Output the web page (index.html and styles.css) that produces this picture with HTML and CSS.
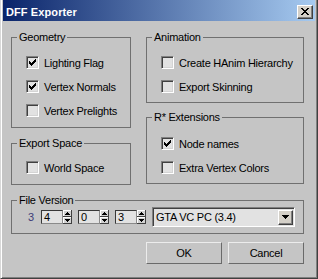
FILE: index.html
```html
<!DOCTYPE html>
<html lang="en">
<head>
    <meta charset="UTF-8">
    <title>DFF Exporter</title>
    <link rel="stylesheet" href="styles.css">
</head>
<body>
    <div class="window">
        <div class="titlebar">
            <span class="title">DFF Exporter</span>
            <button class="close">
                <svg width="8" height="7" viewBox="0 0 8 7" shape-rendering="crispEdges">
                    <path d="M0 0h2v1H0zM6 0h2v1H6zM1 1h2v1H1zM5 1h2v1H5zM2 2h4v1H2zM3 3h2v1H3zM2 4h4v1H2zM1 5h2v1H1zM5 5h2v1H5zM0 6h2v1H0zM6 6h2v1H6z" fill="#000"/>
                </svg>
            </button>
        </div>

        <div class="dialog">
            <div class="columns">
                <div class="col">
                    <fieldset class="group">
                        <legend>Geometry</legend>
                        <div class="group-body">
                            <label class="check"><span class="box"><svg width="11" height="11" viewBox="0 0 11 11" shape-rendering="crispEdges"><path d="M2 4H3V5H4V6H5V5H6V4H7V3H8V2H9V5H8V6H7V7H6V8H5V9H4V8H3V7H2Z"/></svg></span>Lighting Flag</label>
                            <label class="check"><span class="box"><svg width="11" height="11" viewBox="0 0 11 11" shape-rendering="crispEdges"><path d="M2 4H3V5H4V6H5V5H6V4H7V3H8V2H9V5H8V6H7V7H6V8H5V9H4V8H3V7H2Z"/></svg></span>Vertex Normals</label>
                            <label class="check"><span class="box"></span>Vertex Prelights</label>
                        </div>
                    </fieldset>

                    <fieldset class="group export-space">
                        <legend>Export Space</legend>
                        <div class="group-body">
                            <label class="check"><span class="box"></span>World Space</label>
                        </div>
                    </fieldset>
                </div>

                <div class="col">
                    <fieldset class="group animation">
                        <legend>Animation</legend>
                        <div class="group-body">
                            <label class="check"><span class="box"></span>Create HAnim Hierarchy</label>
                            <label class="check"><span class="box"></span>Export Skinning</label>
                        </div>
                    </fieldset>

                    <fieldset class="group extensions">
                        <legend>R* Extensions</legend>
                        <div class="group-body">
                            <label class="check"><span class="box"><svg width="11" height="11" viewBox="0 0 11 11" shape-rendering="crispEdges"><path d="M2 4H3V5H4V6H5V5H6V4H7V3H8V2H9V5H8V6H7V7H6V8H5V9H4V8H3V7H2Z"/></svg></span>Node names</label>
                            <label class="check"><span class="box"></span>Extra Vertex Colors</label>
                        </div>
                    </fieldset>
                </div>
            </div>

            <fieldset class="group version">
                <legend>File Version</legend>
                <div class="version-row">
                    <span class="major">3</span>

                    <div class="spin">
                        <span class="num">4</span>
                        <svg class="arrows" width="9" height="14" viewBox="0 0 9 14" shape-rendering="crispEdges">
                            <rect width="9" height="14" fill="#d2d2d2"/>
                            <path d="M0 0h8v1H1v5H0z" fill="#fff"/>
                            <path d="M8 0h1v7H0V6h8z" fill="#404040"/>
                            <path d="M0 7h8v1H1v5H0z" fill="#fff"/>
                            <path d="M8 7h1v7H0v-1h8z" fill="#404040"/>
                            <path d="M4 2h1v1h1v1h1v1H2V4h1V3h1z" fill="#000"/>
                            <path d="M2 9h5v1H6v1H5v1H4v-1H3v-1H2z" fill="#000"/>
                        </svg>
                    </div>

                    <div class="spin">
                        <span class="num">0</span>
                        <svg class="arrows" width="9" height="14" viewBox="0 0 9 14" shape-rendering="crispEdges">
                            <rect width="9" height="14" fill="#d2d2d2"/>
                            <path d="M0 0h8v1H1v5H0z" fill="#fff"/>
                            <path d="M8 0h1v7H0V6h8z" fill="#404040"/>
                            <path d="M0 7h8v1H1v5H0z" fill="#fff"/>
                            <path d="M8 7h1v7H0v-1h8z" fill="#404040"/>
                            <path d="M4 2h1v1h1v1h1v1H2V4h1V3h1z" fill="#000"/>
                            <path d="M2 9h5v1H6v1H5v1H4v-1H3v-1H2z" fill="#000"/>
                        </svg>
                    </div>

                    <div class="spin">
                        <span class="num">3</span>
                        <svg class="arrows" width="9" height="14" viewBox="0 0 9 14" shape-rendering="crispEdges">
                            <rect width="9" height="14" fill="#d2d2d2"/>
                            <path d="M0 0h8v1H1v5H0z" fill="#fff"/>
                            <path d="M8 0h1v7H0V6h8z" fill="#404040"/>
                            <path d="M0 7h8v1H1v5H0z" fill="#fff"/>
                            <path d="M8 7h1v7H0v-1h8z" fill="#404040"/>
                            <path d="M4 2h1v1h1v1h1v1H2V4h1V3h1z" fill="#000"/>
                            <path d="M2 9h5v1H6v1H5v1H4v-1H3v-1H2z" fill="#000"/>
                        </svg>
                    </div>

                    <div class="select">
                        <span class="select-text">GTA VC PC (3.4)</span>
                        <span class="select-btn">
                            <svg width="7" height="4" viewBox="0 0 7 4" shape-rendering="crispEdges">
                                <path d="M0 0h7v1H6v1H5v1H4v1H3V3H2V2H1V1H0z" fill="#000"/>
                            </svg>
                        </span>
                    </div>
                </div>
            </fieldset>

            <div class="buttons">
                <button class="btn">OK</button>
                <button class="btn">Cancel</button>
            </div>
        </div>
    </div>
</body>
</html>
```

FILE: styles.css
```css
html, body {
    margin: 0;
    padding: 0;
    background: #c5c5c5;
}

body {
    font-family: "Liberation Sans", Arial, sans-serif;
    font-size: 11px;
    letter-spacing: -0.25px;
    color: #000;
}

.window {
    width: 318px;
    height: 279px;
    box-sizing: border-box;
    border: 1px solid;
    border-color: #d8d8d8 #404040 #404040 #d8d8d8;
    border-top: 0;
    padding: 0 2px 2px 2px;
    background: #c5c5c5;
    box-shadow: inset 1px 0 #fff, inset -1px -1px #808080;
}

/* Title bar */
.titlebar {
    height: 21px;
    box-sizing: border-box;
    display: flex;
    align-items: flex-start;
    padding: 0 2px 0 3px;
    background: linear-gradient(to right, #0a246a, #a6caf0);
}

.title {
    margin-top: 3px;
    line-height: 18px;
    font-weight: bold;
    letter-spacing: 0.1px;
    color: #fff;
}

.close {
    margin: 5px 0 0 auto;
    width: 16px;
    height: 14px;
    box-sizing: border-box;
    padding: 2px 0 0 3px;
    display: flex;
    align-items: flex-start;
    border: 1px solid;
    border-color: #fff #404040 #404040 #fff;
    box-shadow: inset -1px -1px #808080;
    background: #d4d0c8;
}

/* Dialog body */
.dialog {
    padding: 10px 11px 0 8px;
}

.columns {
    display: grid;
    grid-template-columns: 120px 158px;
    column-gap: 15px;
    align-items: start;
}

.group {
    margin: 0;
    padding: 0;
    min-inline-size: 0;
    border: 1px solid #707070;
}

.group legend {
    margin-left: 5px;
    padding: 0 2px;
    line-height: 13px;
}

.group-body {
    display: flex;
    flex-direction: column;
    gap: 11px;
    padding: 12px 0 10px 14px;
}

.export-space {
    margin-top: 9px;
}

.export-space .group-body {
    padding-top: 11px;
}

.animation .group-body {
    padding-bottom: 9px;
}

.extensions {
    margin-top: 8px;
}

.extensions .group-body {
    padding: 13px 0 9px 14px;
}

/* Checkboxes */
.check {
    display: flex;
    align-items: center;
    gap: 5px;
    height: 13px;
    white-space: nowrap;
}

.box {
    flex: none;
    width: 13px;
    height: 13px;
    box-sizing: border-box;
    border: 1px solid;
    border-color: #808080 #fff #fff #808080;
    box-shadow: inset 1px 1px #404040, inset -1px -1px #d4d4d4;
    background: #e2e2e2;
}

.box svg {
    display: block;
}

/* File version */
.version {
    margin-top: 9px;
}

.version-row {
    display: flex;
    align-items: center;
    gap: 6px;
    height: 20px;
    padding: 0 0 6px 16px;
}

.major {
    width: 7px;
    color: #3c3c78;
}

.spin {
    display: flex;
}

.num {
    width: 22px;
    height: 14px;
    box-sizing: border-box;
    border: 1px solid #383838;
    border-right-color: #8a8a8a;
    border-bottom-color: #8a8a8a;
    padding-left: 2px;
    line-height: 12px;
    background: #e2e2e2;
}

.arrows {
    display: block;
}

.select {
    width: 143px;
    height: 20px;
    box-sizing: border-box;
    display: flex;
    align-items: center;
    padding: 1px;
    border: 1px solid;
    border-color: #808080 #fff #fff #808080;
    box-shadow: inset 1px 1px #404040;
    background: #e2e2e2;
}

.select-text {
    flex: 1;
    padding-left: 2px;
}

.select-btn {
    width: 15px;
    height: 15px;
    box-sizing: border-box;
    display: flex;
    align-items: center;
    justify-content: center;
    border: 1px solid;
    border-color: #fff #404040 #404040 #fff;
    box-shadow: inset -1px -1px #808080;
    background: #d4d0c8;
}

.select-btn svg {
    display: block;
}

/* OK / Cancel */
.buttons {
    display: flex;
    justify-content: flex-end;
    gap: 6px;
    margin-top: 8px;
}

.btn {
    width: 76px;
    height: 22px;
    padding: 0;
    border: 1px solid;
    border-color: #ececec #6a6a6a #6a6a6a #ececec;
    background: #c5c5c5;
    font: inherit;
    letter-spacing: inherit;
    color: #000;
}
```
